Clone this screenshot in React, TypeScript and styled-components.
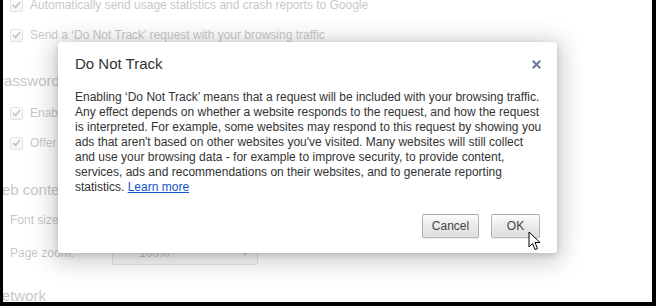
import React from "react";
import styled, { createGlobalStyle } from "styled-components";

const Global = createGlobalStyle`
  html, body { margin: 0; padding: 0; background: #000; }
  body { width: 656px; height: 306px; overflow: hidden; }
`;

const Frame = styled.div`
  position: relative;
  box-sizing: border-box;
  width: 656px;
  height: 306px;
  border-left: 3px solid #000;
  border-right: 4px solid #000;
  border-bottom: 4px solid #000;
  background: #fff;
  overflow: hidden;
  font-family: "Liberation Sans", Arial, sans-serif;
`;

const Settings = styled.div`
  display: flex;
  flex-direction: column;
  margin-top: -10px;
  padding-left: 7px;
  opacity: 0.28;
  color: #333;
  font-size: 12px;
`;

const Row = styled.div<{ $mt?: number }>`
  display: flex;
  align-items: center;
  height: 30px;
  margin-top: ${(p) => p.$mt ?? 0}px;
  gap: 7px;
`;

const Box = styled.span`
  display: inline-flex;
  align-items: center;
  justify-content: center;
  box-sizing: border-box;
  width: 13px;
  height: 13px;
  border: 1px solid #999;
  border-radius: 2px;
  background: linear-gradient(#fafafa, #ddd);
`;

const Heading = styled.div<{ $mt: number; $ml: number }>`
  height: 30px;
  line-height: 30px;
  margin-top: ${(p) => p.$mt}px;
  margin-left: ${(p) => p.$ml}px;
  font-size: 15px;
  color: #333;
  white-space: nowrap;
`;

const Label = styled.span`
  width: 95px;
`;

const Select = styled.div`
  display: flex;
  align-items: center;
  justify-content: space-between;
  box-sizing: border-box;
  width: 146px;
  height: 23px;
  padding: 0 8px 0 26px;
  border: 1px solid #aaa;
  border-radius: 2px;
  background: linear-gradient(#fafafa, #e6e6e6);
  font-size: 12px;
`;

const Caret = styled.span`
  width: 0;
  height: 0;
  border-left: 4px solid transparent;
  border-right: 4px solid transparent;
  border-top: 5px solid #555;
`;

const Dialog = styled.div`
  position: absolute;
  left: 55px;
  top: 42px;
  width: 499px;
  height: 211px;
  box-sizing: border-box;
  background: #fff;
  border-radius: 3px;
  box-shadow: 0 4px 23px 5px rgba(0, 0, 0, 0.2), 0 2px 6px rgba(0, 0, 0, 0.15);
  display: flex;
  flex-direction: column;
  padding: 0 17px 15px 17px;
`;

const Header = styled.div`
  display: flex;
  align-items: center;
  justify-content: space-between;
  height: 42px;
`;

const Title = styled.h1`
  margin: 0;
  font-weight: normal;
  font-size: 15px;
  color: #333;
`;

const Close = styled.button`
  border: 0;
  background: none;
  padding: 0;
  margin-right: -1px;
  margin-top: 2px;
  width: 9px;
  height: 9px;
  display: flex;
  cursor: default;
`;

const Body = styled.div`
  margin-top: 6px;
  font-size: 12px;
  line-height: 15px;
  color: #333;
  flex: 1;
`;

const Line = styled.div`
  white-space: nowrap;
`;

const Link = styled.a`
  color: #15c;
  text-decoration: underline;
`;

const Actions = styled.div`
  display: flex;
  justify-content: flex-end;
  gap: 12px;
`;

const Button = styled.button<{ $w: number }>`
  position: relative;
  box-sizing: border-box;
  width: ${(p) => p.$w}px;
  height: 24px;
  border: 1px solid rgba(0, 0, 0, 0.25);
  border-radius: 2px;
  background: linear-gradient(#fdfdfd, #ededed 40%, #dedede);
  box-shadow: 0 1px 0 rgba(0, 0, 0, 0.08), inset 0 1px 2px rgba(255, 255, 255, 0.75);
  font-family: "Liberation Sans", Arial, sans-serif;
  font-size: 12px;
  color: #444;
  padding: 0;
`;

const Cursor = styled.svg`
  position: absolute;
  left: 36px;
  top: 16px;
`;

const lines = [
  "Enabling \u2018Do Not Track\u2019 means that a request will be included with your browsing traffic.",
  "Any effect depends on whether a website responds to the request, and how the request",
  "is interpreted. For example, some websites may respond to this request by showing you",
  "ads that aren't based on other websites you've visited. Many websites will still collect",
  "and use your browsing data - for example to improve security, to provide content,",
  "services, ads and recommendations on their websites, and to generate reporting",
];

const Check = () => (
  <Box>
    <svg width="9" height="8" viewBox="0 0 9 8">
      <path d="M1 4 L3.5 6.5 L8 1" fill="none" stroke="#333" strokeWidth="1.8" />
    </svg>
  </Box>
);

export default function App() {
  return (
    <>
      <Global />
      <Frame>
        <Settings>
          <Row>
            <Check />
            <span>Automatically send usage statistics and crash reports to Google</span>
          </Row>
          <Row>
            <Check />
            <span>Send a &lsquo;Do Not Track&rsquo; request with your browsing traffic</span>
          </Row>
          <Heading $mt={16} $ml={-16}>Passwords and forms</Heading>
          <Row $mt={2}>
            <Check />
            <span>Enable Autofill to fill out web forms in a single click.</span>
          </Row>
          <Row>
            <Check />
            <span>Offer to save passwords I enter on the web.</span>
          </Row>
          <Heading $mt={17} $ml={-22}>Web content</Heading>
          <Row>
            <Label>Font size:</Label>
            <Select>
              <span>Medium</span>
              <Caret />
            </Select>
          </Row>
          <Row $mt={3}>
            <Label>Page zoom:</Label>
            <Select>
              <span>100%</span>
              <Caret />
            </Select>
          </Row>
          <Heading $mt={13} $ml={-19}>Network</Heading>
        </Settings>

        <Dialog role="dialog">
          <Header>
            <Title>Do Not Track</Title>
            <Close aria-label="Close">
              <svg width="9" height="9" viewBox="0 0 9 9">
                <path d="M1.5 1.5 L7.5 7.5 M7.5 1.5 L1.5 7.5" stroke="#6a7a96" strokeWidth="2" strokeLinecap="square" />
              </svg>
            </Close>
          </Header>
          <Body>
            {lines.map((l) => (
              <Line key={l}>{l}</Line>
            ))}
            <Line>
              statistics. <Link href="#">Learn more</Link>
            </Line>
          </Body>
          <Actions>
            <Button $w={57}>Cancel</Button>
            <Button $w={49}>
              OK
              <Cursor width="14" height="21" viewBox="0 0 14 21">
                <path
                  d="M1 1 L1 16 L4.5 12.5 L7 18.5 L9.5 17.5 L7 11.5 L12 11.5 Z"
                  fill="#fff"
                  stroke="#000"
                  strokeWidth="1"
                  strokeLinejoin="miter"
                />
              </Cursor>
            </Button>
          </Actions>
        </Dialog>
      </Frame>
    </>
  );
}
